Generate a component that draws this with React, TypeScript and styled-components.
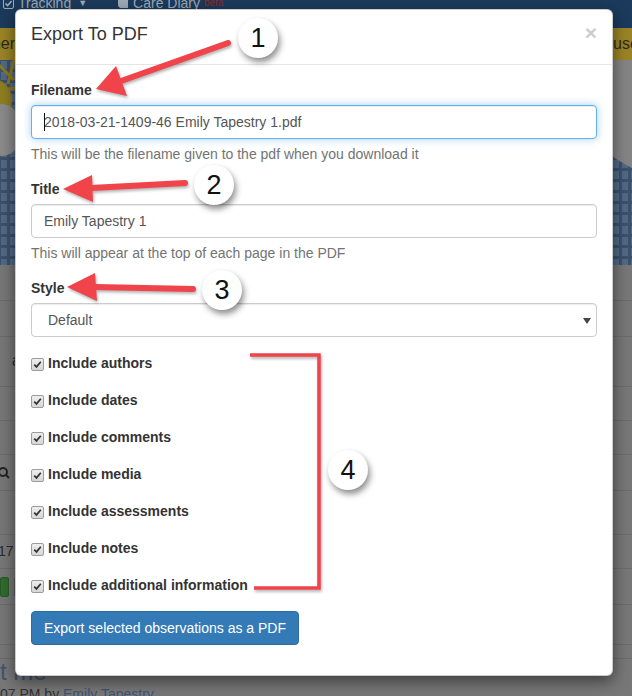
import React from "react";
import styled, { createGlobalStyle } from "styled-components";

const GlobalStyle = createGlobalStyle`
  html, body {
    margin: 0;
    padding: 0;
  }
  body {
    font-family: "Liberation Sans", Arial, sans-serif;
    font-size: 14px;
    line-height: 1.42857;
    color: #333;
  }
  * {
    box-sizing: border-box;
  }
`;

// Page behind the dimmed backdrop
const Page = styled.div`
  position: relative;
  width: 632px;
  height: 696px;
  overflow: hidden;
  background: #777777;
`;

const Navbar = styled.div`
  height: 28px;
  background: #1c3a5c;
  display: flex;
  align-items: flex-start;
  padding-left: 3px;
  color: #9ea9b6;
  font-size: 14px;
  line-height: 20px;
  overflow: hidden;
`;

const NavItem = styled.div<{ $gap?: number }>`
  display: flex;
  align-items: center;
  gap: 4px;
  margin-top: -7px;
  margin-right: ${(p) => p.$gap ?? 0}px;
`;

const Beta = styled.sup`
  color: #8a2a2a;
  font-size: 10px;
  align-self: flex-start;
  margin-top: 0;
`;

const Banner = styled.div`
  height: 32px;
  background: #9a8426;
  display: grid;
  grid-template-columns: 15px 1fr 19px;
  align-items: center;
  font-size: 16px;
  color: #2c2a1c;
  white-space: nowrap;
  overflow: hidden;
`;

const BannerText = styled.span<{ $right?: boolean }>`
  overflow: hidden;
  text-align: ${(p) => (p.$right ? "left" : "right")};
  direction: ${(p) => (p.$right ? "ltr" : "rtl")};
`;

const Hero = styled.div`
  height: 205px;
  background: #465c78;
  overflow: hidden;
`;

const Content = styled.div`
  display: flex;
  flex-direction: column;
`;

const Row = styled.div<{ $h: number }>`
  height: ${(p) => p.$h}px;
  border-bottom: 1px solid #6c6c6c;
  display: flex;
  align-items: center;
  color: #2a2a2a;
  font-size: 14px;
  white-space: nowrap;
`;

const SmallBox = styled.span<{ $green?: boolean }>`
  width: 9px;
  height: 20px;
  border-radius: 2px;
  margin-right: 5px;
  background: ${(p) => (p.$green ? "#2f6b2f" : "transparent")};
  border: 1px solid ${(p) => (p.$green ? "#285a28" : "#5e5e5e")};
`;

const FooterLine = styled.div`
  display: flex;
  flex-direction: column;
  white-space: nowrap;
`;

const BigLink = styled.div`
  font-size: 24px;
  line-height: 26px;
  color: #3d5474;
`;

const Byline = styled.div`
  font-size: 14px;
  color: #333;
  span {
    color: #3d5474;
  }
`;

// Modal
const Modal = styled.div`
  position: absolute;
  left: 15px;
  top: 9px;
  width: 598px;
  background: #fff;
  border: 1px solid rgba(0, 0, 0, 0.2);
  border-radius: 6px;
  box-shadow: 0 5px 15px rgba(0, 0, 0, 0.5);
`;

const ModalHeader = styled.div`
  height: 55px;
  padding: 12px 15px 0 15px;
  border-bottom: 1px solid #e5e5e5;
  display: flex;
  justify-content: space-between;
  align-items: flex-start;
`;

const ModalTitle = styled.h4`
  margin: 0;
  font-size: 18px;
  font-weight: 500;
  line-height: 1.42857;
  color: #333;
`;

const Close = styled.span`
  margin-top: 0;
  font-size: 21px;
  font-weight: bold;
  line-height: 1;
  color: #cccccc;
`;

const ModalBody = styled.div`
  padding: 15px 15px 30px 15px;
`;

const Label = styled.label`
  display: block;
  font-weight: bold;
  line-height: 20px;
  margin-bottom: 5px;
  color: #333;
`;

const InputWrap = styled.div`
  position: relative;
`;

const Input = styled.input<{ $focused?: boolean }>`
  display: block;
  width: 100%;
  height: 34px;
  padding: 6px 12px;
  font-family: inherit;
  font-size: 14px;
  color: #555;
  background: #fff;
  border: 1px solid ${(p) => (p.$focused ? "#66afe9" : "#ccc")};
  border-radius: 4px;
  outline: none;
  box-shadow: ${(p) =>
    p.$focused
      ? "inset 0 1px 1px rgba(0,0,0,.075), 0 0 8px rgba(102,175,233,.6)"
      : "inset 0 1px 1px rgba(0,0,0,.075)"};
`;

const Caret = styled.span`
  position: absolute;
  left: 13px;
  top: 8px;
  width: 1px;
  height: 18px;
  background: #111;
`;

const SelectBox = styled.select`
  display: block;
  width: 100%;
  height: 34px;
  padding: 6px 12px 6px 16px;
  font-family: inherit;
  font-size: 14px;
  color: #555;
  background: #fff;
  border: 1px solid #ccc;
  border-radius: 4px;
  appearance: none;
  box-shadow: inset 0 1px 1px rgba(0, 0, 0, 0.075);
`;

const SelectArrow = styled.span`
  position: absolute;
  right: 6px;
  top: 15px;
  width: 0;
  height: 0;
  border-left: 4px solid transparent;
  border-right: 4px solid transparent;
  border-top: 6px solid #444;
`;

const Help = styled.p`
  margin: 5px 0 15px 0;
  line-height: 20px;
  color: #737373;
`;

const CheckList = styled.div`
  display: flex;
  flex-direction: column;
  gap: 17px;
  margin: 17px 0 15px 0;
`;

const CheckRow = styled.label`
  display: flex;
  align-items: center;
  gap: 4px;
  height: 20px;
  font-weight: bold;
  color: #333;
`;

const CheckBox = styled.span`
  width: 13px;
  height: 13px;
  flex-shrink: 0;
  margin-top: 1px;
  border: 1px solid #9c9c9c;
  border-radius: 2px;
  background: linear-gradient(#eeeeee, #d6d6d6);
  display: inline-flex;
  align-items: center;
  justify-content: center;
`;

const Button = styled.button`
  height: 34px;
  padding: 6px 12px;
  font-family: inherit;
  font-size: 14px;
  line-height: 20px;
  color: #fff;
  background: #337ab7;
  border: 1px solid #2e6da4;
  border-radius: 4px;
`;

// Annotations drawn over the screenshot
const Overlay = styled.svg`
  position: absolute;
  left: 0;
  top: 0;
  pointer-events: none;
  filter: drop-shadow(1px 2px 1.5px rgba(0, 0, 0, 0.3));
`;

const Badge = styled.div<{ $x: number; $y: number }>`
  position: absolute;
  left: ${(p) => p.$x - 20}px;
  top: ${(p) => p.$y - 20}px;
  width: 40px;
  height: 40px;
  border-radius: 50%;
  background: #fff;
  box-shadow: 2px 4px 6px rgba(0, 0, 0, 0.45);
  display: flex;
  align-items: center;
  justify-content: center;
  font-size: 27px;
  color: #111;
  line-height: 1;
`;

const RED = "#f0434a";

const Arrow = ({
  tail,
  base,
  tip,
  w1,
  w2,
}: {
  tail: [number, number];
  base: [number, number];
  tip: [number, number];
  w1: [number, number];
  w2: [number, number];
}) => (
  <g>
    <line
      x1={tail[0]}
      y1={tail[1]}
      x2={base[0]}
      y2={base[1]}
      stroke={RED}
      strokeWidth={6}
      strokeLinecap="round"
    />
    <polygon points={`${tip.join(",")} ${w1.join(",")} ${w2.join(",")}`} fill={RED} />
  </g>
);

const options = [
  "Include authors",
  "Include dates",
  "Include comments",
  "Include media",
  "Include assessments",
  "Include notes",
  "Include additional information",
];

const HeroArt = () => (
  <svg width="632" height="205" viewBox="0 0 632 205">
    <defs>
      <pattern id="tiles" width="9" height="11" patternUnits="userSpaceOnUse">
        <rect width="9" height="11" fill="#3c516b" />
        <rect x="1" y="1" width="6" height="8" fill="#526985" />
      </pattern>
    </defs>
    <rect width="632" height="205" fill="url(#tiles)" />
    <g stroke="#8c7a1e" strokeWidth="3">
      <line x1="-4" y1="2" x2="14" y2="20" />
      <line x1="14" y1="0" x2="8" y2="24" />
      <line x1="-2" y1="30" x2="16" y2="28" />
    </g>
    <circle cx="-10" cy="40" r="22" fill="#8e7d22" />
    <ellipse cx="2" cy="70" rx="20" ry="26" fill="#8a8a8a" />
    <ellipse cx="770" cy="30" rx="200" ry="108" fill="#848484" />
  </svg>
);

const CheckIcon = () => (
  <svg width="9" height="9" viewBox="0 0 9 9">
    <path d="M1.2 4.6 L3.5 6.9 L7.8 1.8" stroke="#333" strokeWidth="1.7" fill="none" />
  </svg>
);

const App = () => {
  return (
    <>
      <GlobalStyle />
      <Page>
        <Navbar>
          <NavItem $gap={30}>
            <svg width="11" height="11" viewBox="0 0 11 11">
              <rect x="0.5" y="0.5" width="10" height="10" rx="1.5" fill="none" stroke="#9ea9b6" />
              <path d="M2.5 5.5 L4.6 7.6 L8.6 3" stroke="#9ea9b6" strokeWidth="1.6" fill="none" />
            </svg>
            <span>Tracking</span>
            <span style={{ fontSize: 9, marginLeft: 3 }}>▼</span>
          </NavItem>
          <NavItem>
            <svg width="12" height="12" viewBox="0 0 12 12">
              <path d="M1 2 L9 1 L11 3 L11 11 L3 11 L1 9 Z" fill="#9ea9b6" />
            </svg>
            <span>Care Diary</span>
            <Beta>beta</Beta>
          </NavItem>
        </Navbar>
        <Banner>
          <BannerText>Banner</BannerText>
          <span />
          <BannerText $right>use</BannerText>
        </Banner>
        <Hero>
          <HeroArt />
        </Hero>
        <Content>
          <Row $h={36} />
          <Row $h={36} />
          <Row $h={50}>
            <span style={{ marginLeft: 12, fontSize: 16 }}>a</span>
          </Row>
          <Row $h={34} />
          <Row $h={34} />
          <Row $h={36}>
            <svg width="10" height="12" viewBox="0 0 10 12">
              <circle cx="3" cy="5" r="4" stroke="#222" strokeWidth="2" fill="none" />
              <line x1="6" y1="8" x2="9" y2="11" stroke="#222" strokeWidth="2" />
            </svg>
          </Row>
          <Row $h={44} />
          <Row $h={34}>
            <span style={{ marginLeft: -2 }}>17</span>
          </Row>
          <Row $h={36}>
            <SmallBox $green />
            <SmallBox />
          </Row>
          <Row $h={40} />
          <Row $h={14} />
          <FooterLine>
            <BigLink>t me</BigLink>
            <Byline>
              07 PM by <span>Emily Tapestry</span>
            </Byline>
          </FooterLine>
        </Content>

        <Modal>
          <ModalHeader>
            <ModalTitle>Export To PDF</ModalTitle>
            <Close>×</Close>
          </ModalHeader>
          <ModalBody>
            <Label>Filename</Label>
            <InputWrap>
              <Input $focused readOnly value="2018-03-21-1409-46 Emily Tapestry 1.pdf" />
              <Caret />
            </InputWrap>
            <Help>This will be the filename given to the pdf when you download it</Help>

            <Label>Title</Label>
            <Input readOnly value="Emily Tapestry 1" />
            <Help>This will appear at the top of each page in the PDF</Help>

            <Label>Style</Label>
            <InputWrap>
              <SelectBox defaultValue="default">
                <option value="default">Default</option>
              </SelectBox>
              <SelectArrow />
            </InputWrap>

            <CheckList>
              {options.map((opt) => (
                <CheckRow key={opt}>
                  <CheckBox>
                    <CheckIcon />
                  </CheckBox>
                  {opt}
                </CheckRow>
              ))}
            </CheckList>

            <Button>Export selected observations as a PDF</Button>
          </ModalBody>
        </Modal>

        <Overlay width="632" height="696" viewBox="0 0 632 696">
          <Arrow tail={[228, 43]} base={[121, 81]} tip={[96, 89]} w1={[116, 66]} w2={[127, 96]} />
          <Arrow tail={[185, 183]} base={[91, 188]} tip={[63, 189]} w1={[92, 175]} w2={[93, 202]} />
          <Arrow tail={[193, 289]} base={[95, 287]} tip={[67, 287]} w1={[95, 273]} w2={[97, 301]} />
          <polyline
            points="250,355 319,355 319,588 254,588"
            fill="none"
            stroke={RED}
            strokeWidth={3.5}
          />
        </Overlay>
        <Badge $x={258} $y={38}>1</Badge>
        <Badge $x={214} $y={185}>2</Badge>
        <Badge $x={222} $y={290}>3</Badge>
        <Badge $x={348} $y={470}>4</Badge>
      </Page>
    </>
  );
};

export default App;
